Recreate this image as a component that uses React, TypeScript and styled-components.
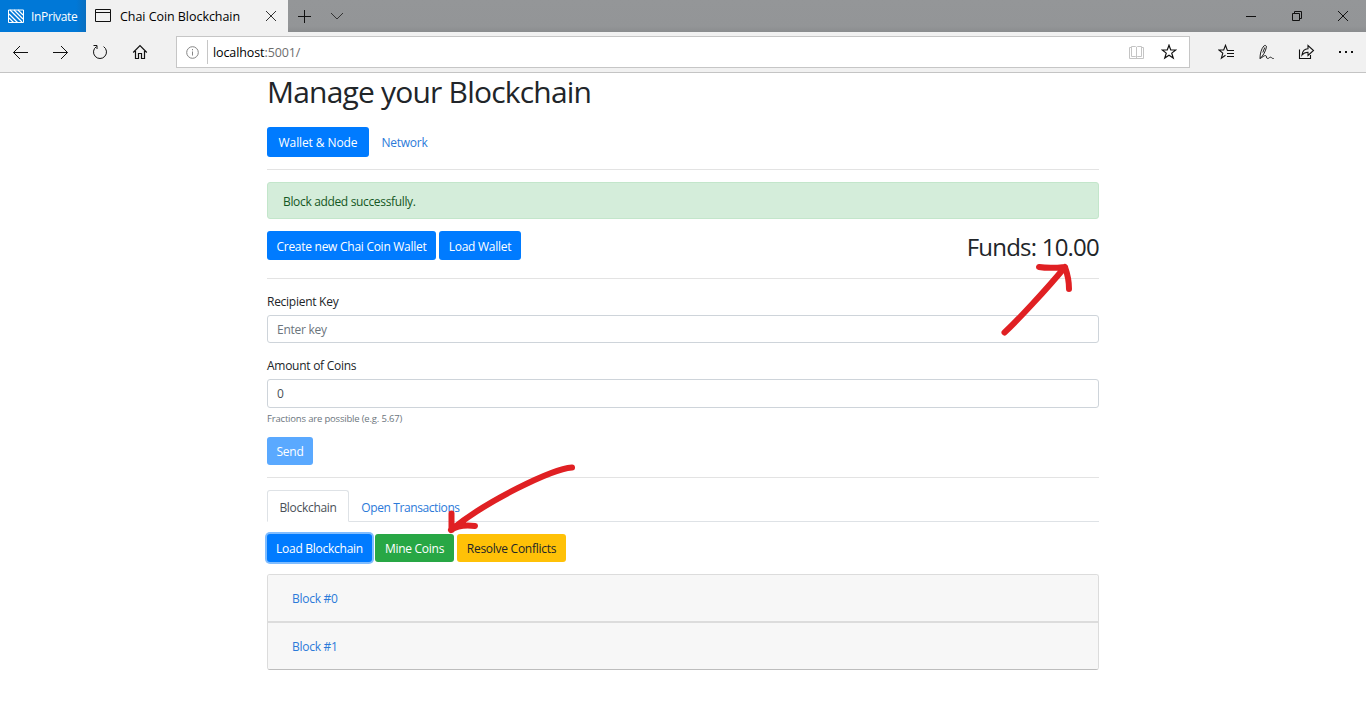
import React from "react";
import styled, { createGlobalStyle } from "styled-components";

const GlobalStyle = createGlobalStyle`
  * { box-sizing: border-box; }
  body {
    margin: 0;
    background: #fff;
    color: #212529;
    font-family: "Open Sans", "Noto Sans", sans-serif;
    font-size: 12px;
    letter-spacing: -0.27px;
    overflow: hidden;
  }
  button, input { font: inherit; letter-spacing: inherit; }
`;

const Screen = styled.div`
  position: relative;
  width: 1366px;
  height: 728px;
  background: #fff;
`;

/* ---------- browser chrome ---------- */

const TitleBar = styled.div`
  display: flex;
  height: 32px;
  background: linear-gradient(#949698 0, #939597 26px, #8a8c8e 32px);
`;

const PrivateBadge = styled.div`
  display: flex;
  align-items: center;
  gap: 7px;
  width: 86px;
  padding-left: 8px;
  background: linear-gradient(90deg, #0078d7 76px, #0a6fc0 86px);
  color: #fff;
  letter-spacing: -0.35px;
`;

const BrowserTab = styled.div`
  display: flex;
  align-items: center;
  width: 202px;
  padding: 0 11px 0 9px;
  background: #f1f1f1;
  color: #000;
`;

const TabTitle = styled.span`
  flex: 1;
  padding-left: 9px;
  font-size: 12.5px;
  letter-spacing: -0.05px;
`;

const TabActions = styled.div`
  display: flex;
  align-items: center;
  gap: 19px;
  flex: 1;
  padding-left: 10px;
`;

const WindowControls = styled.div`
  display: flex;
  align-items: center;
  gap: 32px;
  padding-right: 16px;
`;

const Toolbar = styled.div`
  display: flex;
  align-items: center;
  height: 41px;
  background: #f1f1f1;
  border-bottom: 1px solid #c4c4c4;
`;

const NavButtons = styled.div`
  display: flex;
  align-items: center;
  gap: 24px;
  width: 176px;
  padding-left: 12px;
`;

const AddressBar = styled.div`
  display: flex;
  align-items: center;
  width: 1014px;
  height: 32px;
  padding: 0 12px 0 8px;
  background: #fff;
  border: 1px solid #c6c6c6;
`;

const AddressDivider = styled.span`
  width: 1px;
  height: 24px;
  margin: 0 5px 0 7px;
  background: #c6c6c6;
`;

const Url = styled.span`
  flex: 1;
  color: #000;
  font-size: 12.5px;
  letter-spacing: -0.1px;
  span { color: #6d6d6d; }
`;

const AddressIcons = styled.div`
  display: flex;
  gap: 16px;
`;

const ToolIcons = styled.div`
  display: flex;
  align-items: center;
  justify-content: space-between;
  flex: 1;
  padding: 0 12px 0 28px;
`;

const Icon = styled.svg`
  display: block;
  flex: none;
  fill: none;
  stroke: ${(p) => p.color || "#111"};
  stroke-width: 1;
`;

/* ---------- page ---------- */

const Page = styled.main`
  width: 832px;
  margin-left: 267px;
`;

const Title = styled.h1`
  margin: 0;
  height: 54px;
  font-size: 30px;
  line-height: 38px;
  font-weight: 400;
  letter-spacing: -0.8px;
`;

const Row = styled.div<{ $gap?: number }>`
  display: flex;
  gap: ${(p) => p.$gap ?? 3}px;
`;

const Pill = styled.a<{ $active?: boolean; $width: number }>`
  width: ${(p) => p.$width}px;
  height: 30px;
  line-height: 31px;
  text-align: center;
  letter-spacing: ${(p) => (p.$active ? -0.1 : -0.27)}px;
  border-radius: 3px;
  background: ${(p) => (p.$active ? "#007bff" : "transparent")};
  color: ${(p) => (p.$active ? "#fff" : "#2b7ad9")};
`;

const Divider = styled.hr`
  margin: 12px 0;
  border: 0;
  height: 1px;
  background: #e3e3e3;
`;

const Alert = styled.div`
  height: 37px;
  padding-left: 15px;
  line-height: 37px;
  background: #d4edda;
  border: 1px solid #c3e6cb;
  border-radius: 3px;
  color: #155724;
  letter-spacing: -0.34px;
`;

const WalletRow = styled.div`
  display: flex;
  justify-content: space-between;
  margin-top: 12px;
  height: 35px;
`;

const Button = styled.button<{ $width: number; $bg?: string; $ink?: string; $focus?: boolean; $tall?: boolean }>`
  display: block;
  width: ${(p) => p.$width}px;
  height: ${(p) => (p.$tall ? 29 : 28)}px;
  padding: 1px 0 0;
  border: 0;
  border-radius: 3px;
  background: ${(p) => p.$bg || "#007bff"};
  color: ${(p) => p.$ink || "#fff"};
  box-shadow: ${(p) => (p.$focus ? "0 0 0 2px #80bdff" : "none")};
  white-space: nowrap;
`;

const Funds = styled.h2`
  margin: 0;
  font-size: 24px;
  line-height: 32px;
  font-weight: 400;
  letter-spacing: -0.78px;
`;

const Label = styled.label`
  display: block;
  height: 24px;
  line-height: 21px;
`;

const Input = styled.input<{ $height: number }>`
  display: block;
  width: 100%;
  height: ${(p) => p.$height}px;
  padding: 0 9px;
  border: 1px solid #ced4da;
  border-radius: 3px;
  color: #495057;
  outline: none;
  &::placeholder { color: #6c757d; opacity: 1; }
`;

const Field = styled.div`
  margin-bottom: 12px;
`;

const Hint = styled.small`
  display: block;
  height: 29px;
  margin-top: -12px;
  padding-top: 4px;
  font-size: 9.5px;
  line-height: 14px;
  letter-spacing: -0.18px;
  color: #6c757d;
`;

const Tabs = styled.div`
  display: flex;
  height: 32px;
  margin-bottom: 12px;
  border-bottom: 1px solid #dee2e6;
`;

const TabItem = styled.a<{ $active?: boolean; $width: number }>`
  width: ${(p) => p.$width}px;
  height: 32px;
  line-height: 33px;
  text-align: center;
  letter-spacing: ${(p) => (p.$active ? -0.3 : -0.4)}px;
  border: 1px solid ${(p) => (p.$active ? "#dee2e6" : "transparent")};
  border-bottom-color: ${(p) => (p.$active ? "#fff" : "transparent")};
  border-radius: 3px 3px 0 0;
  color: ${(p) => (p.$active ? "#495057" : "#2b7ad9")};
`;

const Accordion = styled.div`
  margin-top: 12px;
  border: 1px solid #dcdcdc;
  border-bottom-color: #bdbdbd;
  border-radius: 3px;
  overflow: hidden;
`;

const AccordionItem = styled.div`
  height: 47px;
  padding-left: 24px;
  line-height: 48px;
  background: #f7f7f7;
  color: #2b7ad9;
  & + & { border-top: 1px solid #dcdcdc; }
  &:first-child { border-bottom: 1px solid #dcdcdc; }
`;

const Annotations = styled.svg`
  position: absolute;
  inset: 0;
  pointer-events: none;
  fill: none;
  stroke: #e02023;
  stroke-width: 6;
  stroke-linecap: round;
  stroke-linejoin: round;
`;

const STAR = "M8 1.2l1.75 4.8h5l-4 3.1 1.5 5L8 11.2 3.75 14.1l1.5-5-4-3.1h5z";

export default function App() {
  return (
    <Screen>
      <GlobalStyle />
      <TitleBar>
        <PrivateBadge>
          <Icon width="16" height="14" color="#fff">
            <path d="M.5 1h15v12.5H.5z" />
            <path d="M1 9l5 5M1 5l9 9M2 1l12 12M6 1l9 9M10 1l5 5" strokeWidth="1.3" />
          </Icon>
          <span>InPrivate</span>
        </PrivateBadge>
        <BrowserTab>
          <Icon width="16" height="14">
            <path d="M.5.5h15v12H.5zM.5 3.5h15" />
          </Icon>
          <TabTitle>Chai Coin Blockchain</TabTitle>
          <Icon width="12" height="12" color="#333">
            <path d="M1 1l10 10M11 1L1 11" />
          </Icon>
        </BrowserTab>
        <TabActions>
          <Icon width="13" height="13">
            <path d="M6.500 0v13M0 6.500h13" />
          </Icon>
          <Icon width="14" height="8" color="#333">
            <path d="M1 1l6 6 6-6" />
          </Icon>
        </TabActions>
        <WindowControls>
          <Icon width="14" height="12">
            <path d="M2 6.500h10" />
          </Icon>
          <Icon width="14" height="12">
            <path d="M2.500 3.500h7v7h-7zM4.500 3v-1.500h7v7h-1.500" />
          </Icon>
          <Icon width="14" height="12">
            <path d="M2 1l10 10M12 1L2 11" />
          </Icon>
        </WindowControls>
      </TitleBar>
      <Toolbar>
        <NavButtons>
          <Icon width="16" height="16">
            <path d="M1.500 8.500H16M8 2L1.500 8.500 8 15" />
          </Icon>
          <Icon width="16" height="16">
            <path d="M1 8.500h14.500M9 2l6.500 6.500L9 15" />
          </Icon>
          <Icon width="16" height="16">
            <path d="M11.600 2.600A6.500 6.500 0 1 1 4.400 2.600M1.500 1.500h3.500V5" />
          </Icon>
          <Icon width="16" height="16">
            <path d="M1.200 8.500L8 1.700l6.800 6.800M3.500 7v7.500h3V9.500h3v5h3V7" strokeWidth="1.200" />
          </Icon>
        </NavButtons>
        <AddressBar>
          <Icon width="15" height="15" color="#858585">
            <circle cx="7.500" cy="7.500" r="5.800" />
            <path d="M7.500 6.500v4M7.500 4v1.300" />
          </Icon>
          <AddressDivider />
          <Url>localhost<span>:5001/</span></Url>
          <AddressIcons>
            <Icon width="16" height="16" color="#c4c4c4">
              <path d="M7.500 3v11M2.500 2.500h4l1 .8 1-.8h4v10h-4l-1 .8-1-.8h-4zM2.500 3.500h-2v11h14v-11h-2" />
            </Icon>
            <Icon width="16" height="16">
              <path d={STAR} strokeWidth="1.200" />
            </Icon>
          </AddressIcons>
        </AddressBar>
        <ToolIcons>
          <Icon width="17" height="16">
            <path d="M9.800 6H9.200L7.500 1.300 5.700 6H1l3.800 3.200-1.400 5 4.100-2.900M9 6.500h7M9 9.500h7M9 12.500h7" strokeWidth="1.100" />
          </Icon>
          <Icon width="17" height="17" color="#222">
            <path d="M2 14.500c0-4.500 1.200-9.500 3.800-12.500 1.200-1.200 3-.4 2.600 1.200C7.600 7 5.500 11.500 2 14.500zM4.800 8.500l2-5M2 14.500c2.500-1.200 4-3 5.500-3s.3 3 2.200 3c1.500 0 1.600-1.500 3-1.300 1 .1 1.300 1.600 3 1.300" />
          </Icon>
          <Icon width="17" height="16">
            <path d="M1.500 5.500v9h11V11M4 11c.5-4 2.500-6 6-6.200V1.500l5.500 5-5.500 5V8.200C7 8.200 5.500 9 4 11z" strokeWidth="1.100" />
          </Icon>
          <Icon width="16" height="16">
            <path d="M1 8h2M7 8h2M13 8h2" strokeWidth="2" />
          </Icon>
        </ToolIcons>
      </Toolbar>

      <Page>
        <Title>Manage your Blockchain</Title>
        <Row $gap={1}>
          <Pill $active $width={102}>Wallet &amp; Node</Pill>
          <Pill $width={69}>Network</Pill>
        </Row>
        <Divider />
        <Alert>Block added successfully.</Alert>
        <WalletRow>
          <Row>
            <Button $width={169} $tall>Create new Chai Coin Wallet</Button>
            <Button $width={82} $tall>Load Wallet</Button>
          </Row>
          <Funds>Funds: 10.00</Funds>
        </WalletRow>
        <Divider />
        <Field>
          <Label>Recipient Key</Label>
          <Input $height={28} placeholder="Enter key" />
        </Field>
        <Field>
          <Label>Amount of Coins</Label>
          <Input $height={29} defaultValue="0" />
        </Field>
        <Hint>Fractions are possible (e.g. 5.67)</Hint>
        <Button $width={46} $bg="#5aa9ff">Send</Button>
        <Divider />
        <Tabs>
          <TabItem $active $width={82}>Blockchain</TabItem>
          <TabItem $width={123}>Open Transactions</TabItem>
        </Tabs>
        <Row>
          <Button $width={105} $focus>Load Blockchain</Button>
          <Button $width={79} $bg="#28a745">Mine Coins</Button>
          <Button $width={109} $bg="#ffc107" $ink="#212529">Resolve Conflicts</Button>
        </Row>
        <Accordion>
          <AccordionItem>Block #0</AccordionItem>
          <AccordionItem>Block #1</AccordionItem>
        </Accordion>
      </Page>

      <Annotations width="1366" height="728">
        <path d="M1004.500 332.500C1017 321 1046 290 1065 267M1039 267c9 1.500 17 1 26 0c2.500 7 4 14 4 22" />
        <path d="M572 467.500C552 469 486 501 451 530M451.500 513.500V530M451 530c7-5 16-5 24-4" />
      </Annotations>
    </Screen>
  );
}
